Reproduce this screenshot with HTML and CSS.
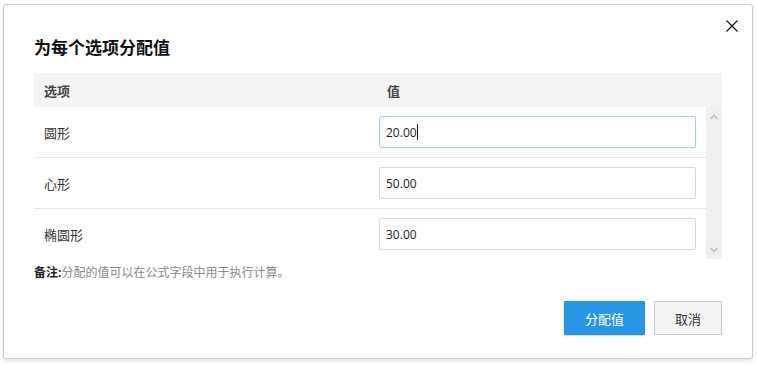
FILE: index.html
```html
<!DOCTYPE html>
<html lang="zh-CN">
<head>
  <meta charset="UTF-8" />
  <title>为每个选项分配值</title>
  <link rel="stylesheet" href="styles.css">
</head>
<body>
  <div class="dialog">
    <button class="close" type="button" aria-label="关闭">
      <svg width="12" height="12" viewBox="0 0 12 12">
        <path d="M0.5 0.5 L11.5 11.5 M11.5 0.5 L0.5 11.5" stroke="#111" stroke-width="1.2" fill="none" />
      </svg>
    </button>

    <h1 class="title">为每个选项分配值</h1>

    <div class="table">
      <div class="table-head">
        <div class="col-name">选项</div>
        <div class="col-value">值</div>
      </div>
      <div class="table-body">
        <div class="rows">
          <div class="row">
            <div class="col-name">圆形</div>
            <div class="col-value">
              <span class="field">
                <input class="input focused" type="text" value="20.00" />
                <span class="caret"></span>
              </span>
            </div>
          </div>
          <div class="row">
            <div class="col-name">心形</div>
            <div class="col-value">
              <span class="field"><input class="input" type="text" value="50.00" /></span>
            </div>
          </div>
          <div class="row">
            <div class="col-name">椭圆形</div>
            <div class="col-value">
              <span class="field"><input class="input" type="text" value="30.00" /></span>
            </div>
          </div>
        </div>
        <div class="scrollbar">
          <svg width="16" height="12" viewBox="0 0 16 12">
            <path d="M4.5 8 L8 4.5 L11.5 8" stroke="#c2c2c2" stroke-width="1.6" fill="none" />
          </svg>
          <svg width="16" height="12" viewBox="0 0 16 12">
            <path d="M4.5 4 L8 7.5 L11.5 4" stroke="#c2c2c2" stroke-width="1.6" fill="none" />
          </svg>
        </div>
      </div>
    </div>

    <p class="note"><b>备注:</b>分配的值可以在公式字段中用于执行计算。</p>

    <div class="actions">
      <button class="btn btn-primary" type="button">分配值</button>
      <button class="btn btn-default" type="button">取消</button>
    </div>
  </div>
</body>
</html>
```

FILE: styles.css
```css
body {
  margin: 0;
  padding: 4px 0 0 3px;
  background: #fff;
  font-family: "Open Sans", "Noto Sans CJK SC", sans-serif;
  color: #333;
  height: 361px;
  overflow: hidden;
}

.dialog {
  position: relative;
  width: 688px;
  padding: 31px 30px 23px 30px;
  background: #fff;
  border: 1px solid #c9c9c9;
  border-radius: 3px;
  box-shadow: 0 2px 4px rgba(0, 0, 0, 0.12);
}

.close {
  position: absolute;
  top: 14px;
  right: 13px;
  width: 14px;
  height: 14px;
  padding: 1px;
  border: 0;
  background: none;
}

.title {
  margin: 0 0 13px 0;
  font-size: 17px;
  line-height: 24px;
  font-weight: bold;
  color: #111;
}

.table-head {
  display: flex;
  height: 34px;
  align-items: center;
  background: #f4f4f4;
  font-size: 13px;
  font-weight: bold;
  color: #444;
}

.table-head .col-name {
  width: 333px;
  padding-left: 10px;
}

.table-head .col-value {
  padding-left: 10px;
}

.table-body {
  display: flex;
  height: 152px;
  overflow: hidden;
}

.rows {
  flex: 1;
}

.row {
  display: flex;
  align-items: center;
  height: 50px;
  border-bottom: 1px solid #e8e8e8;
  font-size: 13px;
}

.row .col-name {
  width: 333px;
  padding-left: 10px;
}

.row .col-value {
  flex: 1;
  padding: 0 10px 0 2px;
}

.field {
  position: relative;
  display: block;
}

.input {
  display: block;
  box-sizing: border-box;
  width: 100%;
  height: 32px;
  padding: 0 6px;
  border: 1px solid #d9d9d9;
  border-radius: 2px;
  font-family: "Open Sans", "Noto Sans CJK SC", sans-serif;
  font-size: 12px;
  color: #222;
  outline: none;
}

.input.focused {
  border-color: #9ecdf3;
}

.caret {
  position: absolute;
  left: 38px;
  top: 8px;
  width: 1px;
  height: 16px;
  background: #111;
}

.scrollbar {
  width: 16px;
  display: flex;
  flex-direction: column;
  justify-content: space-between;
  padding: 4px 0 3px 0;
  background: #efefef;
}

.note {
  margin: 0;
  padding: 4px 0;
  font-size: 12px;
  line-height: 20px;
  color: #888;
}

.note b {
  color: #222;
}

.actions {
  display: flex;
  justify-content: flex-end;
  gap: 9px;
  margin-top: 14px;
}

.btn {
  height: 34px;
  border-radius: 1px;
  font-family: "Open Sans", "Noto Sans CJK SC", sans-serif;
  font-size: 13px;
}

.btn-primary {
  width: 81px;
  border: 1px solid #2590e0;
  background: #2896e4;
  color: #fff;
  box-shadow: 0 1px 2px rgba(0, 0, 0, 0.15);
}

.btn-default {
  width: 68px;
  border: 1px solid #c8c8c8;
  background: #f3f3f3;
  color: #333;
}
```
